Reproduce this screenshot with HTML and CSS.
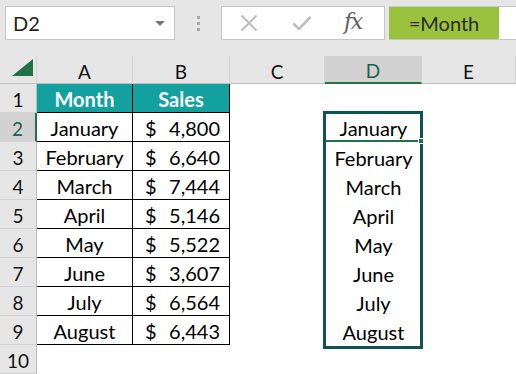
FILE: index.html
```html
<!DOCTYPE html>
<html>
<head>
<meta charset="utf-8">
<link rel="stylesheet" href="styles.css">
</head>
<body>
<div class="app">
  <div class="toolbar">
    <div class="namebox"><span class="nb-text">D2</span><span class="nb-arrow"></span></div>
    <div class="dots"><i></i><i></i><i></i></div>
    <div class="fxbox">
      <svg class="ico-x" width="18" height="18" viewBox="0 0 18 18"><path d="M1.5 1.5 L16.5 16.5 M16.5 1.5 L1.5 16.5" stroke="#bdbdbd" stroke-width="2" fill="none"/></svg>
      <svg class="ico-check" width="20" height="16" viewBox="0 0 20 16"><path d="M1.5 8.5 L7 14 L18.5 2" stroke="#bdbdbd" stroke-width="2.6" fill="none"/></svg>
      <span class="fx">fx</span>
    </div>
    <div class="formula"><span class="formula-hl">=Month</span></div>
  </div>
  <div class="sheet">
    <div class="ch corner"><span class="tri"></span></div>
    <div class="ch">A</div>
    <div class="ch">B</div>
    <div class="ch">C</div>
    <div class="ch ch-sel">D</div>
    <div class="ch">E</div>

    <div class="rh">1</div>
    <div class="c tb head">Month</div>
    <div class="c tb head">Sales</div>
    <div class="c"></div><div class="c"></div><div class="c"></div>

    <div class="rh rh-sel">2</div>
    <div class="c tb">January</div>
    <div class="c tb num"><span>$</span><span>4,800</span></div>
    <div class="c"></div><div class="c d2">January<span class="handle"></span><span class="sel"></span></div><div class="c"></div>

    <div class="rh">3</div>
    <div class="c tb">February</div>
    <div class="c tb num"><span>$</span><span>6,640</span></div>
    <div class="c"></div><div class="c">February</div><div class="c"></div>

    <div class="rh">4</div>
    <div class="c tb">March</div>
    <div class="c tb num"><span>$</span><span>7,444</span></div>
    <div class="c"></div><div class="c">March</div><div class="c"></div>

    <div class="rh">5</div>
    <div class="c tb">April</div>
    <div class="c tb num"><span>$</span><span>5,146</span></div>
    <div class="c"></div><div class="c">April</div><div class="c"></div>

    <div class="rh">6</div>
    <div class="c tb">May</div>
    <div class="c tb num"><span>$</span><span>5,522</span></div>
    <div class="c"></div><div class="c">May</div><div class="c"></div>

    <div class="rh">7</div>
    <div class="c tb">June</div>
    <div class="c tb num"><span>$</span><span>3,607</span></div>
    <div class="c"></div><div class="c">June</div><div class="c"></div>

    <div class="rh">8</div>
    <div class="c tb">July</div>
    <div class="c tb num"><span>$</span><span>6,564</span></div>
    <div class="c"></div><div class="c">July</div><div class="c"></div>

    <div class="rh">9</div>
    <div class="c tb">August</div>
    <div class="c tb num"><span>$</span><span>6,443</span></div>
    <div class="c"></div><div class="c">August</div><div class="c"></div>

    <div class="rh">10</div>
    <div class="c"></div><div class="c"></div><div class="c"></div><div class="c"></div><div class="c"></div>
  </div>
</div>
</body>
</html>
```

FILE: styles.css
```css
* { box-sizing: border-box; }
html, body { margin: 0; padding: 0; }
body {
  width: 516px;
  height: 374px;
  overflow: hidden;
  background: #ffffff;
  font-family: Lato, "Open Sans", sans-serif;
  color: #000;
}
.app { width: 516px; height: 374px; display: flex; flex-direction: column; }

.toolbar {
  height: 56px;
  background: #e6e6e6;
  display: flex;
  align-items: flex-start;
  padding-top: 6px;
}
.namebox {
  margin-left: 5px;
  width: 170px;
  height: 34px;
  background: #fff;
  border: 1px solid #c6c6c6;
  display: flex;
  align-items: center;
  justify-content: space-between;
  padding: 0 9px 0 7px;
}
.nb-text { font-size: 20px; color: #222; }
.nb-arrow {
  width: 0; height: 0;
  border-left: 5px solid transparent;
  border-right: 5px solid transparent;
  border-top: 5px solid #777;
}
.dots {
  width: 46px;
  height: 34px;
  display: flex;
  flex-direction: column;
  align-items: center;
  justify-content: center;
  gap: 3px;
}
.dots i { display: block; width: 3px; height: 3px; background: #a8a8a8; }
.fxbox {
  width: 164px;
  height: 34px;
  background: #fff;
  border: 1px solid #c6c6c6;
  display: flex;
  align-items: center;
  padding-left: 18px;
}
.ico-x { margin-right: 34px; }
.ico-check { margin-right: 32px; }
.fx {
  font-family: "DejaVu Serif", "Liberation Serif", serif;
  font-style: italic;
  font-size: 22px;
  color: #5f5f5f;
  letter-spacing: -1.5px;
  margin-top: -4px;
}
.formula {
  margin-left: 4px;
  flex: 1;
  height: 34px;
  background: #fff;
  border-top: 1px solid #c6c6c6;
  border-bottom: 1px solid #c6c6c6;
  display: flex;
}
.formula-hl {
  width: 110px;
  background: #9bc23c;
  color: #2b2b2b;
  font-size: 20px;
  display: flex;
  align-items: center;
  justify-content: center;
}

.sheet {
  display: grid;
  grid-template-columns: 37px 96px 97px 95px 97px 94px;
  grid-template-rows: 28px repeat(10, 29px);
}
.ch {
  background: #e6e6e6;
  border-right: 1px solid #d4d4d4;
  border-bottom: 1px solid #bdbdbd;
  display: flex;
  align-items: center;
  justify-content: center;
  font-size: 19px;
  padding-top: 3px;
  color: #111;
}
.ch-sel {
  background: #d2d2d2;
  border-bottom: 2px solid #217346;
  color: #1b6150;
}
.corner { justify-content: flex-end; align-items: flex-end; padding: 0 3px 7px 0; }
.tri {
  width: 0; height: 0;
  border-left: 21px solid transparent;
  border-bottom: 17px solid #217346;
}
.rh {
  background: #e6e6e6;
  border-right: 1px solid #bdbdbd;
  border-bottom: 1px solid #d4d4d4;
  display: flex;
  align-items: center;
  justify-content: center;
  font-size: 19px;
  padding-top: 2px;
  color: #111;
}
.rh-sel {
  background: #d2d2d2;
  border-right: 2px solid #217346;
  color: #1b6150;
}
.c {
  display: flex;
  align-items: center;
  justify-content: center;
  font-size: 20px;
  padding-top: 2px;
  background: #fff;
}
.tb { border-right: 1px solid #000; border-bottom: 1px solid #000; }
.head {
  background: #12a19e;
  color: #fff;
  font-weight: bold;
}
.num { justify-content: space-between; padding: 2px 9px 0 12px; }
.d2 { position: relative; border-bottom: 2px solid #217346; padding-top: 3px; }
.handle {
  position: absolute;
  right: -2px;
  bottom: -4px;
  width: 6px;
  height: 6px;
  background: #217346;
  border: 1px solid #fff;
  z-index: 3;
}
.sel {
  position: absolute;
  top: -2px;
  left: -2px;
  right: -1px;
  height: 238px;
  border: 3px solid #0e5454;
  pointer-events: none;
  z-index: 2;
}
```
